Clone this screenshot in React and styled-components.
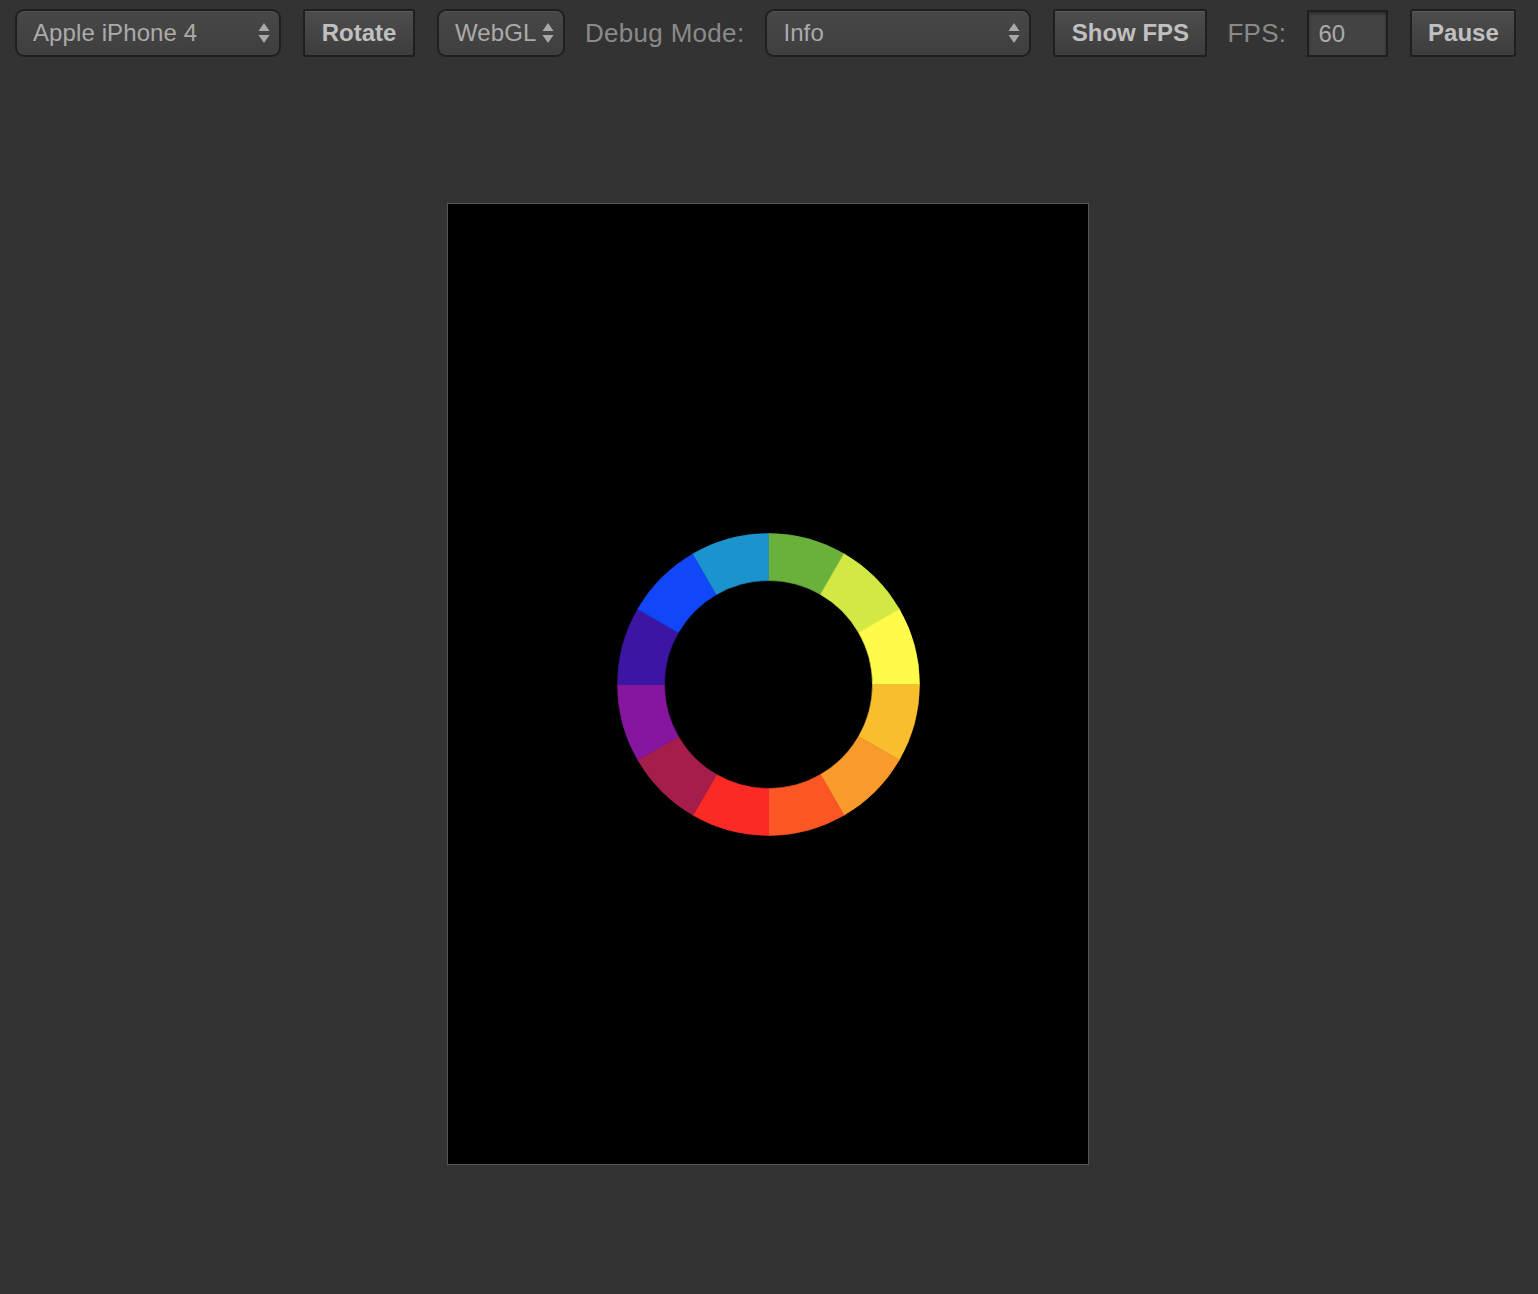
import styled, { createGlobalStyle } from 'styled-components'

const GlobalStyle = createGlobalStyle`
  html, body {
    margin: 0;
    padding: 0;
    background: #333333;
  }
  body {
    font-family: "Liberation Sans", Arial, Helvetica, sans-serif;
    min-height: 1294px;
  }
`

const COLORS = [
  '#6ab13c', '#d3e843', '#fefb4b', '#f8be2e',
  '#f99b2a', '#fb5623', '#fb2a24', '#a41d4b',
  '#8616a0', '#3c15a2', '#1147f8', '#1b94ce',
]

const arcPath = (i, cx, cy, r1, r2) => {
  const a0 = ((i * 30 - 90) * Math.PI) / 180
  const a1 = (((i + 1) * 30 - 90) * Math.PI) / 180
  const p = (r, a) => `${(cx + r * Math.cos(a)).toFixed(2)} ${(cy + r * Math.sin(a)).toFixed(2)}`
  return `M ${p(r2, a0)} A ${r2} ${r2} 0 0 1 ${p(r2, a1)} L ${p(r1, a1)} A ${r1} ${r1} 0 0 0 ${p(r1, a0)} Z`
}

const Arrows = () => (
  <svg width="12" height="22" viewBox="0 0 12 22">
    <path d="M6 1 L11.5 9 L0.5 9 Z" fill="#a8a8a8" />
    <path d="M6 21 L11.5 13 L0.5 13 Z" fill="#a8a8a8" />
  </svg>
)

const App = () => {
  return (
    <>
      <GlobalStyle />
      <Toolbar>
        <Select width={266}>
          <span>Apple iPhone 4</span>
          <Arrows />
        </Select>
        <Button width={112}>Rotate</Button>
        <Select width={128}>
          <span>WebGL</span>
          <Arrows />
        </Select>
        <Label>Debug Mode:</Label>
        <Select width={266}>
          <span>Info</span>
          <Arrows />
        </Select>
        <Button width={154}>Show FPS</Button>
        <Label>FPS:</Label>
        <FpsInput>60</FpsInput>
        <Button width={106}>Pause</Button>
      </Toolbar>
      <Stage>
        <Canvas>
          <svg width="640" height="960" viewBox="0 0 640 960">
            {COLORS.map((c, i) => (
              <path key={i} d={arcPath(i, 320.5, 480.5, 104, 151)} fill={c} stroke={c} strokeWidth="0.6" />
            ))}
          </svg>
        </Canvas>
      </Stage>
    </>
  )
}

const Toolbar = styled.div`
  display: flex;
  align-items: center;
  gap: 22px;
  padding: 9px 15px 0 15px;
  height: 48px;
`

const Select = styled.div`
  box-sizing: border-box;
  width: ${p => p.width}px;
  height: 48px;
  display: flex;
  align-items: center;
  justify-content: space-between;
  padding: 0 9px 0 16px;
  background: linear-gradient(#474747, #3f3f3f);
  border: 2px solid #1f1f1f;
  border-radius: 9px;
  box-shadow: inset 0 1px 0 rgba(255, 255, 255, 0.06);
  color: #ababab;
  font-size: 24px;
  letter-spacing: 0.1px;
`

const Button = styled.div`
  box-sizing: border-box;
  width: ${p => p.width}px;
  height: 48px;
  display: flex;
  align-items: center;
  justify-content: center;
  background: linear-gradient(#4d4d4d, #3d3d3d);
  border: 2px solid #1f1f1f;
  border-radius: 3px;
  box-shadow: inset 0 1px 0 rgba(255, 255, 255, 0.08);
  color: #c0c0c0;
  font-size: 24px;
  font-weight: bold;
`

const Label = styled.div`
  color: #8a8a8a;
  font-size: 26px;
  letter-spacing: 0.3px;
  margin: 0 -1px 0 -2px;
`

const FpsInput = styled.div`
  box-sizing: border-box;
  width: 81px;
  height: 47px;
  margin-top: 1px;
  display: flex;
  align-items: center;
  padding-left: 9px;
  background: #434343;
  border: 2px solid #1f1f1f;
  box-shadow: inset 0 2px 3px rgba(0, 0, 0, 0.35);
  color: #ababab;
  font-size: 24px;
`

const Stage = styled.div`
  display: flex;
  justify-content: center;
  padding-top: 146px;
  padding-right: 2px;
`

const Canvas = styled.div`
  width: 640px;
  height: 960px;
  border: 1px solid #555555;
  background: #000000;

  svg {
    display: block;
  }
`

export default App
